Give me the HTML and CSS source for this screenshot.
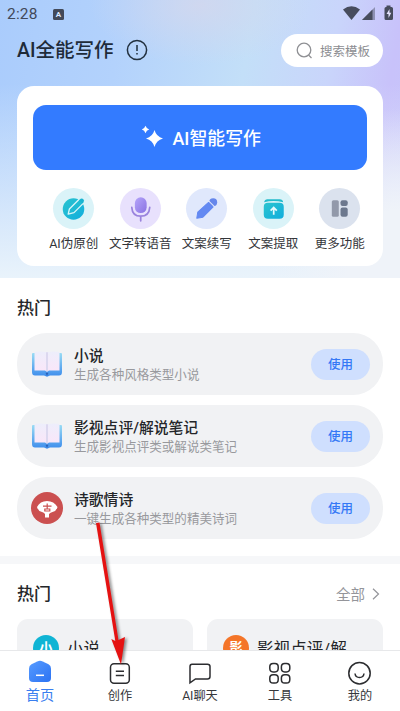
FILE: index.html
```html
<!DOCTYPE html>
<html lang="zh-CN">
<head>
<meta charset="utf-8">
<title>AI全能写作</title>
<link rel="stylesheet" href="styles.css">
</head>
<body>
<svg width="0" height="0" class="defs" aria-hidden="true">
  <defs>
    <linearGradient id="teal" x1="0" y1="0" x2="1" y2="1"><stop offset="0" stop-color="#2bc4cf"/><stop offset="1" stop-color="#10addd"/></linearGradient>
    <linearGradient id="violet" x1="0" y1="0" x2="1" y2="1"><stop offset="0" stop-color="#b5a5fa"/><stop offset="1" stop-color="#8a72e2"/></linearGradient>
    <linearGradient id="home" x1="0" y1="0" x2="1" y2="1"><stop offset="0" stop-color="#579bff"/><stop offset="1" stop-color="#2b73f3"/></linearGradient>
    <linearGradient id="cover" x1="0" y1="0" x2="0" y2="1"><stop offset="0" stop-color="#9adcf4"/><stop offset="1" stop-color="#3d8cec"/></linearGradient>
    <linearGradient id="page" x1="0" y1="0" x2="0" y2="1"><stop offset="0" stop-color="#edeefb"/><stop offset="1" stop-color="#fae6f9"/></linearGradient>
    <symbol id="book" viewBox="0 0 32 28">
      <path d="M1 4Q1 3 2 3H30Q31 3 31 4V22Q31 25.500 28 25.500H19L16 26.800 13 25.500H4Q1 25.500 1 22Z" fill="url(#cover)"/>
      <path d="M3.500 2Q10 1 16 2.300Q22 1 28.500 2V20.500H18L16 21.700 14 20.500H3.500Z" fill="url(#page)"/>
      <path d="M15 2.300H17V20.800L16 21.500 15 20.800Z" fill="#dcd8ef"/>
      <path d="M14.500 22.700H17.500L16 26Z" fill="#2e62b8"/>
    </symbol>
  </defs>
</svg>
<div class="screen">
  <section class="hero">
    <div class="status">
      <span class="clock">2:28</span><span class="ime">A</span>
      <svg class="signals" width="54" height="18" viewBox="0 0 54 18" fill="#474c5d">
        <path d="M0 4.500Q8.500-1.800 17 4.500L8.500 15Z"/>
        <path d="M19 15L32 2V15Z" opacity=".45"/><path d="M19 15L29.500 4.500V15Z"/>
        <path d="M43.500 .5H47.500V2H48.500Q50 2 50 3.500V13.500Q50 15 48.500 15H43Q41.500 15 41.500 13.500V3.500Q41.500 2 43 2H43.500Z"/>
        <path d="M46.500 4L43.500 9H45.500V13L48.300 7.800H46.500Z" fill="#e4e2fc"/>
      </svg>
    </div>
    <header class="header">
      <h1>AI全能写作</h1>
      <svg class="info" width="22" height="22" viewBox="0 0 22 22" fill="none" stroke="#22303f" stroke-width="1.500"><circle cx="11" cy="11" r="9.600"/><path d="M11 6V12M11 14V15.600"/></svg>
      <div class="search">
        <svg width="17" height="17" viewBox="0 0 17 17" fill="none" stroke="#8f9094" stroke-width="1.300"><circle cx="8" cy="8" r="6.800"/><path d="M12.500 13L15.500 16"/></svg>
        <span>搜索模板</span>
      </div>
    </header>
    <div class="panel">
      <div class="cta">
        <svg width="24" height="24" viewBox="0 0 24 24" fill="#fff"><path d="M13.500 5Q15.300 11.700 22 13.500Q15.300 15.300 13.500 22Q11.700 15.300 5 13.500Q11.700 11.700 13.500 5Z"/><path d="M4.500 .8Q5.400 3.600 8.200 4.500Q5.400 5.400 4.500 8.200Q3.600 5.400 .8 4.500Q3.600 3.600 4.500 .8Z"/></svg>
        <span>AI智能写作</span>
      </div>
      <div class="tools">
        <div class="tool"><svg class="disc mint" viewBox="0 0 40 40"><circle cx="20" cy="20.500" r="10.500" fill="url(#teal)"/><path d="M14.800 25.500L16 20.500 26 10.500Q29.500 10.500 30.500 14L20.500 24Z" fill="#20bbd4" stroke="#d9f5f8" stroke-width="1.300" stroke-linejoin="round"/><path d="M25.500 12L27 10.500Q29.500 9.500 30.300 12.500L29 15Z" fill="#18b4d1"/></svg><span>AI伪原创</span></div>
        <div class="tool"><svg class="disc lilac" viewBox="0 0 40 40"><rect x="14.500" y="9" width="11.500" height="15.500" rx="5.750" fill="url(#violet)"/><path d="M11.500 19Q12 27.500 20.200 27.500T29 19M20.200 27.500V32" fill="none" stroke="#9a83dd" stroke-width="1.700" stroke-linecap="round"/></svg><span>文字转语音</span></div>
        <div class="tool"><svg class="disc sky" viewBox="0 0 40 40"><path d="M10.500 29.500L11.500 23.500 22 14 26.500 18.500 16.500 28.500Z" fill="#6389f2" stroke="#6389f2" stroke-linejoin="round"/><circle cx="26.500" cy="14" r="3.900" fill="#6687eb"/><path d="M22 12.500L28 18.500" stroke="#e0e8fc" stroke-width="1"/></svg><span>文案续写</span></div>
        <div class="tool"><svg class="disc mint" viewBox="0 0 40 40"><path d="M10.800 14Q11.500 11 14 11H26Q29 11 29.500 14Q20 11.500 10.800 14Z" fill="#25bccc"/><rect x="10.500" y="14.500" width="19.500" height="15.500" rx="4" fill="url(#teal)"/><path d="M20.200 26V19.500M17.200 22L20.200 19 23.200 22" fill="none" stroke="#e6fafd" stroke-width="1.700"/></svg><span>文案提取</span></div>
        <div class="tool"><svg class="disc steel" viewBox="0 0 40 40"><rect x="12.500" y="12" width="6.800" height="16" rx="1.500" fill="#9299aa"/><rect x="21" y="12" width="7" height="5.500" rx="2" fill="#6c788e"/><rect x="21" y="19" width="7" height="9" rx="2" fill="#6c788e"/></svg><span>更多功能</span></div>
      </div>
    </div>
  </section>

  <section class="hot">
    <h2>热门</h2>
    <div class="row"><svg class="pic" viewBox="0 0 32 28"><use href="#book" width="32" height="28"/></svg><div class="copy"><b>小说</b><span>生成各种风格类型小说</span></div><button>使用</button></div>
    <div class="row"><svg class="pic" viewBox="0 0 32 28"><use href="#book" width="32" height="28"/></svg><div class="copy"><b>影视点评/解说笔记</b><span>生成影视点评类或解说类笔记</span></div><button>使用</button></div>
    <div class="row"><svg class="pic" viewBox="0 0 32 32"><circle cx="16" cy="16" r="16" fill="#cb5050"/><path d="M6 15Q9 9 16 9T26.500 15Q25.500 19 21.500 20Q19.500 20.500 18 22V25.500H14V22Q13 20.500 11 20Q7 19 6 15Z" fill="#fff"/><path d="M12 14.200H20.500M16.200 11.500V16.800M13.800 17H18.800V19H13.800Z" fill="none" stroke="#cb5050" stroke-width="1.200"/></svg><div class="copy"><b>诗歌情诗</b><span>一键生成各种类型的精美诗词</span></div><button>使用</button></div>
  </section>

  <section class="more">
    <div class="more-head"><h2>热门</h2><span class="all">全部</span><svg width="8" height="12" viewBox="0 0 8 12" fill="none" stroke="#94959a" stroke-width="1.200"><path d="M1 .8L6.500 6 1 11.200"/></svg></div>
    <div class="cards">
      <div class="card"><i class="cyan">小</i><span>小说</span></div>
      <div class="card"><i class="orange">影</i><span>影视点评/解</span></div>
    </div>
  </section>

  <nav class="tabs">
    <div class="tab active"><svg viewBox="0 0 24 24"><path d="M9.300 1.400Q12 .2 14.700 1.400L20.500 4.300Q23 5.700 23 8.500V18Q23 22 19 22H5Q1 22 1 18V8.500Q1 5.700 3.500 4.300Z" fill="url(#home)"/><path d="M8 15.300H16" stroke="#fff" stroke-width="1.500"/></svg><span>首页</span></div>
    <div class="tab"><svg viewBox="0 0 24 24"><rect x="2.500" y="2.700" width="18.800" height="19.600" rx="3.500"/><path d="M7.800 10.200H16M7.800 14.500H16"/></svg><span>创作</span></div>
    <div class="tab"><svg viewBox="0 0 24 24"><path d="M4 3.200H19.500Q22 3.200 22 5.500V15.500Q22 18 19.500 18H7.500L2 21.800V5.500Q2 3.200 4 3.200Z"/></svg><span>AI聊天</span></div>
    <div class="tab"><svg viewBox="0 0 24 24"><rect x="1.800" y="2.500" width="8.400" height="8.400" rx="3.300"/><rect x="13.400" y="2.500" width="8.400" height="8.400" rx="3.300"/><rect x="1.800" y="13.700" width="8.400" height="8.400" rx="3.300"/><rect x="13.400" y="13.700" width="8.400" height="8.400" rx="3.300"/></svg><span>工具</span></div>
    <div class="tab"><svg viewBox="0 0 24 24"><circle cx="11.500" cy="12.200" r="10.700"/><path d="M7 12.500Q7.500 16.500 11.500 16.500T16 12.500"/></svg><span>我的</span></div>
  </nav>

  <svg class="arrow" width="50" height="156" viewBox="0 0 50 156"><path d="M2 12L5.500 11.500 24.500 129 31 126 27 153.500 17.300 128 21.300 130Z" class="arrow-shape"/></svg>
</div>
</body>
</html>
```
FILE: styles.css
```css
* { box-sizing: border-box; }
body {
  margin: 0;
  font-family: Roboto, "Noto Sans CJK SC", sans-serif;
  color: #242629;
  background: #fff;
}
h1, h2 { margin: 0; font-weight: 500; }
svg { display: block; flex: none; }
.defs { position: absolute; }
.screen {
  position: relative;
  width: 400px;
  height: 711px;
  overflow: hidden;
  display: flex;
  flex-direction: column;
}

.hero {
  height: 278px;
  flex: none;
  padding: 0 17px;
  background:
    radial-gradient(ellipse 130px 170px at 100% 100%, rgba(239,243,249,1) 40%, rgba(233,239,251,0)),
    linear-gradient(180deg, rgba(237,245,252,0) 30%, #e9f3fb 100%),
    radial-gradient(ellipse 110px 60px at 200px 5px, rgba(214,215,236,.75), rgba(214,215,236,0)),
    linear-gradient(100deg, #aaccfc 0%, #b3d2fc 28%, #c3dff8 57%, #c9d5fb 76%, #c8c2fa 90%, #c6c5fa 100%);
}
.status { height: 28px; display: flex; align-items: center; margin: 0 -10px; color: #424959; }
.clock { font-size: 15.500px; line-height: 28px; width: 46px; letter-spacing: .2px; }
.ime { width: 11px; height: 11px; border-radius: 1.500px; background: #424959; color: #dbe8ff; font-size: 8px; line-height: 11.500px; font-weight: 700; text-align: center; }
.signals { margin-left: auto; margin-right: -4px; }
.header { height: 44px; display: flex; align-items: center; }
.header h1 { font-size: 19.500px; line-height: 28px; padding-top: 2px; color: #1e2b3a; }
.info { margin-left: 12.500px; }
.search { margin-left: auto; width: 102px; height: 33px; padding: 0 13px 0 15px; border-radius: 17px; background: #fff; display: flex; align-items: center; gap: 7px; font-size: 12.500px; color: #8c8d91; white-space: nowrap; }
.panel { margin-top: 14px; height: 180px; border-radius: 17px; background: #fff; padding: 19px 16.500px 0 16px; }
.cta { height: 65px; border-radius: 13px; background: #337bff; color: #fff; display: flex; align-items: center; justify-content: center; gap: 8px; padding: 0 0 1px 2px; font-size: 17.900px; font-weight: 500; }
.tools { display: grid; grid-template-columns: repeat(5, 66.500px); margin: 18px 0 0 7.500px; }
.tool { display: flex; flex-direction: column; align-items: center; font-size: 12.500px; line-height: 18px; color: #333539; white-space: nowrap; }
.disc { width: 41px; height: 41px; border-radius: 50%; margin-bottom: 6px; }
.mint { background: #daf3f8; }
.lilac { background: #e8e1fd; }
.sky { background: #e0e8fc; }
.steel { background: #dbe2ee; }

.hot { height: 278px; flex: none; padding: 17px 17.500px 0 17px; }
h2 { font-size: 17px; line-height: 26px; }
.hot h2 { margin-bottom: 12px; }
.row { height: 62px; margin-bottom: 10px; border-radius: 30px; background: #f1f2f4; display: flex; align-items: center; padding: 0 12.500px 0 14px; }
.pic { width: 32px; height: 32px; }
.copy { flex: 1; margin-left: 11px; padding-top: 2px; display: flex; flex-direction: column; }
.copy b { font-size: 14.800px; line-height: 20px; font-weight: 500; }
.copy span { font-size: 12.560px; line-height: 18px; color: #98999d; }
.row button { width: 59px; height: 31px; border: 0; border-radius: 16px; background: #cfdffe; color: #3478f6; font: 500 12.500px/18px Roboto, "Noto Sans CJK SC", sans-serif; padding: 1px 0 0; }

.more { height: 94px; flex: none; border-top: 8px solid #f6f7f9; padding: 17px 17px 0; overflow: hidden; }
.more-head { display: flex; align-items: center; height: 26px; }
.all { margin-left: auto; margin-right: 7px; padding-top: 3px; font-size: 14.500px; line-height: 22px; color: #94959a; }
.more-head svg { margin-right: 3px; }
.cards { display: grid; grid-template-columns: 176px 176px; gap: 14px; margin-top: 12px; }
.card { height: 70px; border-radius: 11px; background: #f1f2f4; padding: 16px 0 0 16px; display: flex; gap: 8px; font-size: 16.600px; line-height: 29px; white-space: nowrap; }
.card i { width: 26px; height: 26px; border-radius: 50%; color: #fff; font-style: normal; font-weight: 700; font-size: 13px; text-align: center; line-height: 25px; }
.cyan { background: #10b4d4; }
.orange { background: #f47528; }

.tabs { height: 61px; border-top: 1px solid #e7e8ea; background: #fff; display: grid; grid-template-columns: repeat(5, 1fr); }
.tab { display: flex; flex-direction: column; align-items: center; padding-top: 10px; font-size: 12.200px; line-height: 18px; color: #35373b; }
.tab svg { width: 24px; height: 24px; fill: none; stroke: #2c2d30; stroke-width: 1.500; margin-bottom: 2px; }
.tab.active svg { stroke: none; margin-bottom: 1px; margin-top: -1px; }
.tab.active { color: #397eef; font-size: 14.200px; line-height: 21px; }
.arrow { position: absolute; left: 94px; top: 511px; filter: drop-shadow(2.500px 1.500px 1.500px rgba(0,0,0,.45)); }
.arrow-shape { fill: #e51212; }
```
